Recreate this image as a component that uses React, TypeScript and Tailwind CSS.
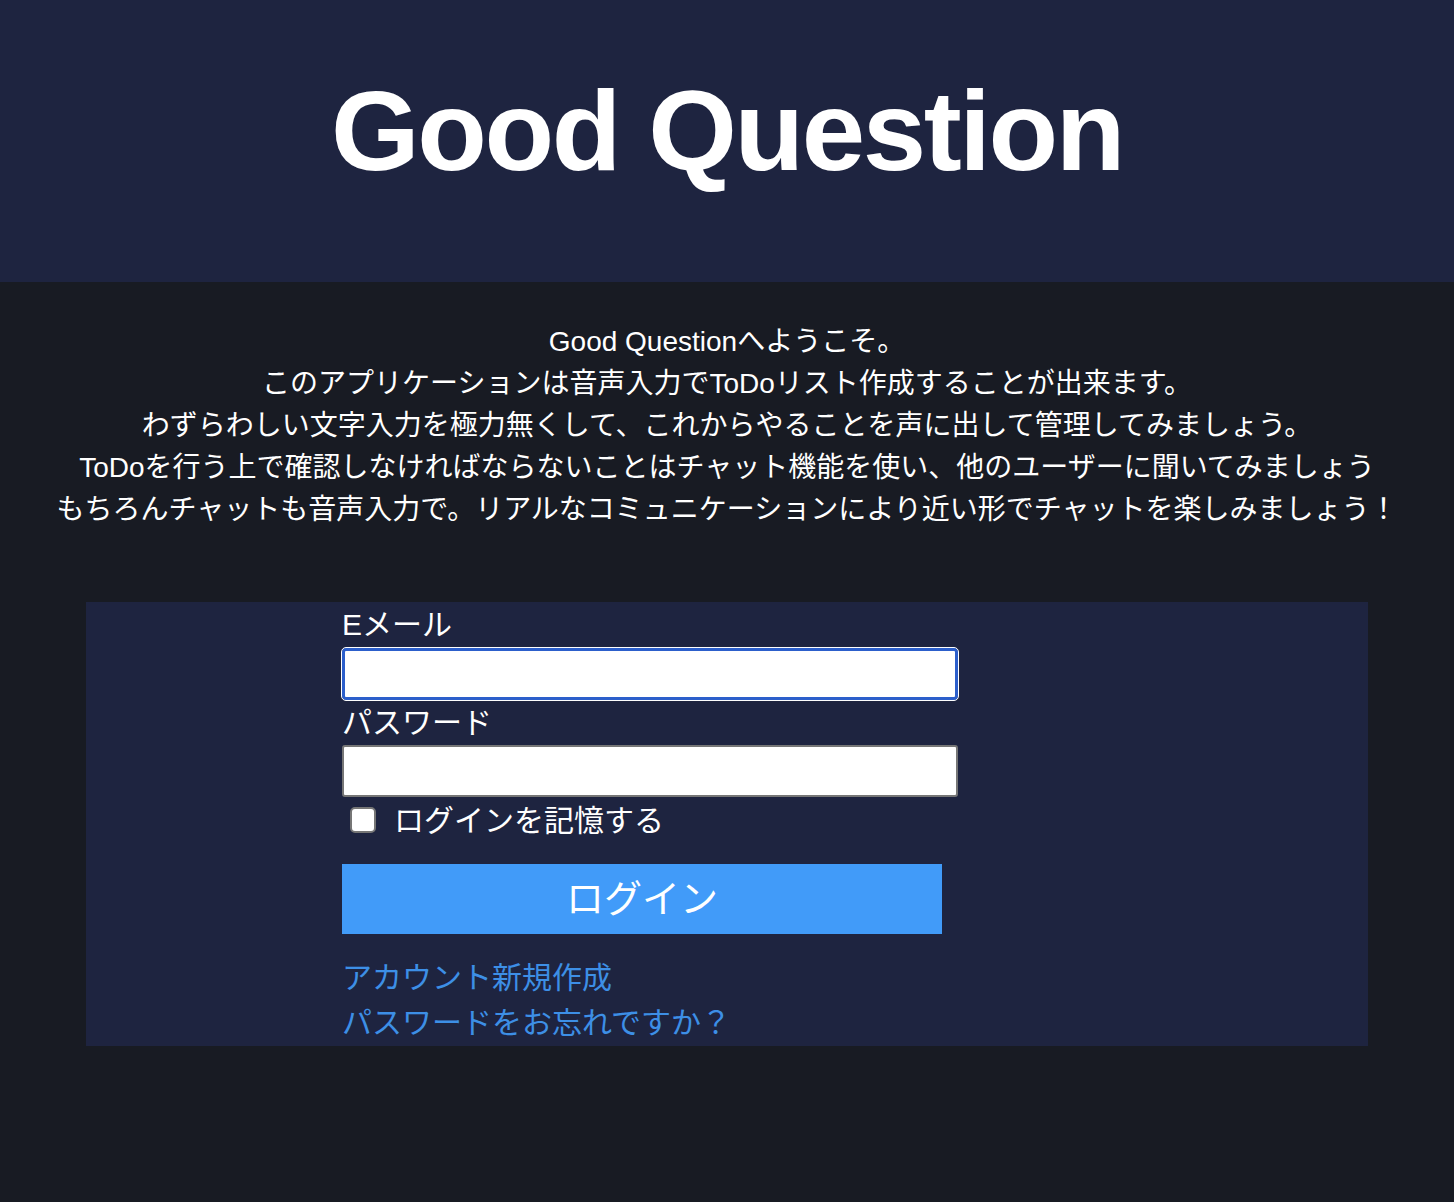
import React from "react";

const font = { fontFamily: '"Liberation Sans", "Noto Sans CJK JP", sans-serif' };

export default function App() {
  return (
    <div
      className="min-h-[1202px] w-full bg-[#181b23] text-white"
      style={font}
    >
      <header className="flex h-[282px] items-center justify-center bg-[#1e2440] pb-[20px]">
        <h1 className="text-[114px] font-bold leading-none tracking-[-2.4px] text-white">
          Good Question
        </h1>
      </header>

      <div className="mt-[39px] text-center text-[28px] leading-[42px]">
        <p>Good Questionへようこそ。</p>
        <p>このアプリケーションは音声入力でToDoリスト作成することが出来ます。</p>
        <p>わずらわしい文字入力を極力無くして、これからやることを声に出して管理してみましょう。</p>
        <p>ToDoを行う上で確認しなければならないことはチャット機能を使い、他のユーザーに聞いてみましょう</p>
        <p>もちろんチャットも音声入力で。リアルなコミュニケーションにより近い形でチャットを楽しみましょう！</p>
      </div>

      <form
        className="mx-[86px] mt-[71px] flex h-[444px] flex-col bg-[#1e2440] pl-[256px]"
        onSubmit={(e) => e.preventDefault()}
      >
        <label className="block text-[30px] leading-[45px]">Eメール</label>
        <input
          type="email"
          className="mt-[1px] h-[52px] w-[616px] rounded-[4px] border-[3px] border-[#2c5fcb] bg-white text-black outline outline-1 outline-white"
        />
        <label className="block text-[30px] leading-[45px]">パスワード</label>
        <input
          type="password"
          className="h-[52px] w-[616px] rounded-[3px] border-2 border-[#767676] bg-white text-black outline-none"
        />
        <div className="flex h-[46px] items-center">
          <input
            type="checkbox"
            className="ml-[8px] mr-[18px] h-[26px] w-[26px] appearance-none rounded-[5px] border-2 border-[#767676] bg-white"
          />
          <span className="text-[30px] leading-[45px]">ログインを記憶する</span>
        </div>
        <button
          type="submit"
          className="mt-[21px] h-[70px] w-[600px] bg-[#419bf9] text-[38px] text-white"
        >
          ログイン
        </button>
        <a href="#" className="mt-[21px] block w-fit text-[30px] leading-[45px] text-[#3d8fe6]">
          アカウント新規作成
        </a>
        <a href="#" className="block w-fit text-[30px] leading-[45px] text-[#3d8fe6]">
          パスワードをお忘れですか？
        </a>
      </form>
    </div>
  );
}
